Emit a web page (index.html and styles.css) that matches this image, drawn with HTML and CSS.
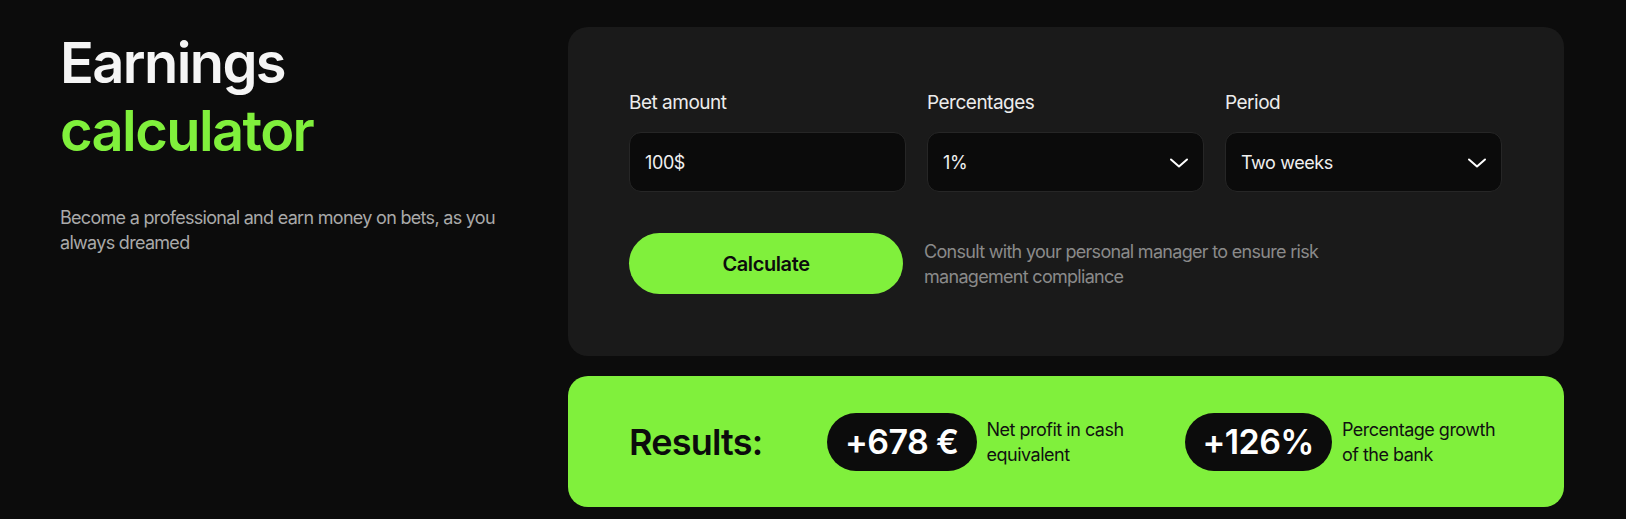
FILE: index.html
```html
<!DOCTYPE html>
<html>
<head>
<title>Earnings calculator</title>
<link rel="stylesheet" href="styles.css">
</head>
<body>
    <div class="page">
        <div class="intro">
            <h1 class="intro-title">Earnings<br><span class="accent">calculator</span></h1>
            <p class="intro-text">Become a professional and earn money on bets, as you always dreamed</p>
        </div>

        <div class="calc">
            <div class="calc-card">
                <div class="fields">
                    <div class="field">
                        <span class="field-label">Bet amount</span>
                        <div class="field-box">100$</div>
                    </div>
                    <div class="field">
                        <span class="field-label">Percentages</span>
                        <div class="field-box">
                            1%
                            <svg class="chevron" width="20" height="10" viewBox="0 0 20 10"><path d="M2 1.5 10 8.5 18 1.5" fill="none" stroke="#fff" stroke-width="2" stroke-linecap="round" stroke-linejoin="round"/></svg>
                        </div>
                    </div>
                    <div class="field">
                        <span class="field-label">Period</span>
                        <div class="field-box">
                            Two weeks
                            <svg class="chevron" width="20" height="10" viewBox="0 0 20 10"><path d="M2 1.5 10 8.5 18 1.5" fill="none" stroke="#fff" stroke-width="2" stroke-linecap="round" stroke-linejoin="round"/></svg>
                        </div>
                    </div>
                </div>
                <div class="actions">
                    <button class="calc-button">Calculate</button>
                    <span class="note">Consult with your personal manager to ensure risk management compliance</span>
                </div>
            </div>

            <div class="results-card">
                <span class="results-title">Results:</span>
                <div class="result">
                    <span class="pill">+678 €</span>
                    <span class="result-text">Net profit in cash equivalent</span>
                </div>
                <div class="result">
                    <span class="pill">+126%</span>
                    <span class="result-text">Percentage growth of the bank</span>
                </div>
            </div>
        </div>
    </div>
</body>
</html>
```

FILE: styles.css
```css
body {
    margin: 0;
    background: #0c0c0c;
    font-family: "Inter", "Noto Sans", sans-serif;
    color: #f2f2f2;
}
.page {
    display: flex;
    padding: 27px 62px 12px 60px;
}
.intro {
    flex: 1;
    padding-top: 2px;
}
.intro-title {
    margin: 0;
    font-size: 56px;
    line-height: 68px;
    font-weight: 600;
    letter-spacing: -1.6px;
    color: #f5f5f5;
}
.accent {
    color: #80f03c;
}
.intro-text {
    margin: 40px 0 0 0;
    max-width: 450px;
    font-size: 18px;
    line-height: 25px;
    color: #a9a9a9;
    letter-spacing: -0.7px;
}
.calc {
    width: 996px;
    flex-shrink: 0;
    display: flex;
    flex-direction: column;
    gap: 20px;
}
.calc-card {
    background: #1a1a1a;
    border-radius: 20px;
    padding: 62px 62px 62px 61px;
}
.fields {
    display: grid;
    grid-template-columns: repeat(3, 1fr);
    gap: 21px;
}
.field {
    display: flex;
    flex-direction: column;
    gap: 16px;
}
.field-label {
    font-size: 19px;
    line-height: 27px;
    color: #ececec;
    letter-spacing: -0.5px;
}
.field-box {
    box-sizing: border-box;
    height: 60px;
    background: #0b0b0b;
    border: 1px solid #262626;
    border-radius: 12px;
    padding: 1px 14px 0 15px;
    display: flex;
    align-items: center;
    justify-content: space-between;
    font-size: 18px;
    color: #f0f0f0;
    letter-spacing: -0.4px;
}
.actions {
    display: flex;
    align-items: center;
    gap: 21px;
    margin-top: 41px;
}
.calc-button {
    width: 274px;
    height: 61px;
    flex-shrink: 0;
    border: none;
    border-radius: 31px;
    background: #80f03c;
    font-family: "Inter", "Noto Sans", sans-serif;
    font-size: 20px;
    font-weight: 600;
    color: #0c0c0c;
    cursor: pointer;
    letter-spacing: -0.4px;
}
.note {
    max-width: 400px;
    font-size: 18px;
    line-height: 25px;
    color: #8a8a8a;
    letter-spacing: -0.7px;
}
.results-card {
    background: #80f03c;
    border-radius: 20px;
    height: 131px;
    box-sizing: border-box;
    padding: 0 30px 0 61px;
    display: flex;
    align-items: center;
    gap: 33px;
    color: #0c0c0c;
}
.results-title {
    width: 165px;
    flex-shrink: 0;
    font-size: 36px;
    font-weight: 600;
    letter-spacing: -0.8px;
}
.result {
    display: flex;
    align-items: center;
    gap: 10px;
    flex-shrink: 0;
}
.result + .result {
    margin-left: 5px;
}
.pill {
    height: 58px;
    padding: 0 18px;
    border-radius: 29px;
    background: #0c0c0c;
    color: #fff;
    font-size: 34px;
    font-weight: 600;
    display: flex;
    align-items: center;
    white-space: nowrap;
    letter-spacing: -0.6px;
}
.result-text {
    width: 160px;
    font-size: 18px;
    line-height: 25px;
    color: #111;
    letter-spacing: -0.5px;
}
```
